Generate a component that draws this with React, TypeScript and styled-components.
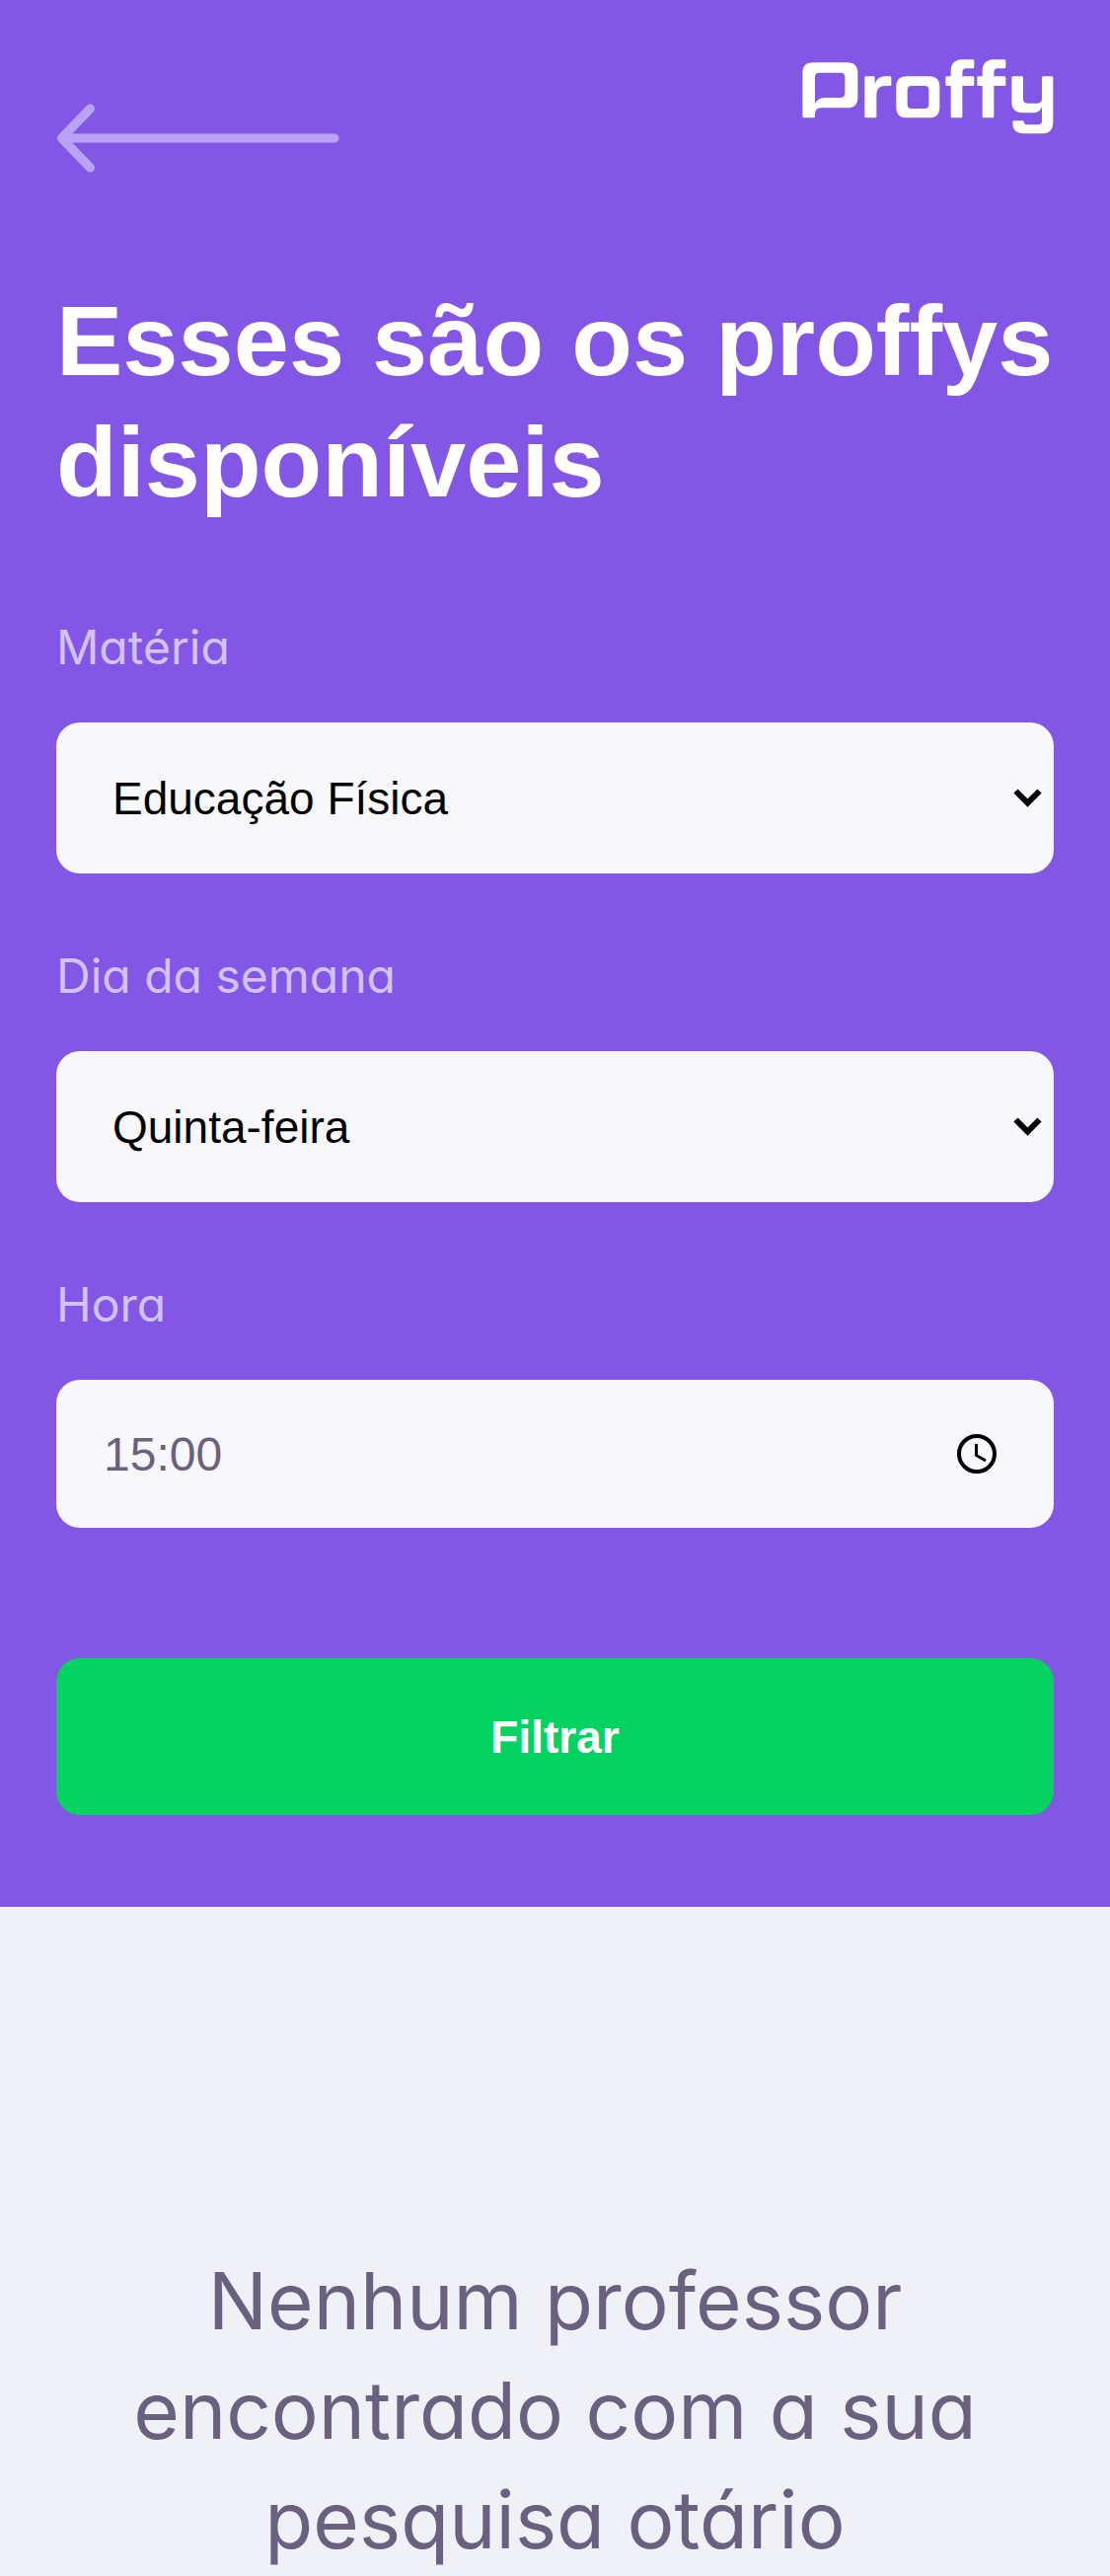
import React, { useState } from "react";
import styled, { createGlobalStyle } from "styled-components";

const GlobalStyle = createGlobalStyle`
  * {
    box-sizing: border-box;
    margin: 0;
    padding: 0;
  }

  body {
    min-height: 100vh;
    background: #f0f0f7;
    font-family: Inter, "Open Sans", sans-serif;
    font-feature-settings: "cv11" 1;
  }

  input, select, button {
    font-family: "Liberation Sans", Arial, sans-serif;
  }
`;

const Header = styled.header`
  display: flex;
  flex-direction: column;
  padding: 60px 57px 93px;
  background: #8257e5;
`;

const TopBar = styled.div`
  display: flex;
  justify-content: space-between;
  align-items: flex-start;
`;

const BackLink = styled.a`
  display: flex;
  align-items: center;
  height: 160px;
`;

const Title = styled.h1`
  margin-top: 64px;
  color: #ffffff;
  font-family: "Liberation Sans", Arial, sans-serif;
  font-size: 101px;
  font-weight: 700;
  line-height: 123px;
`;

const Form = styled.form`
  display: flex;
  flex-direction: column;
  gap: 64px;
  margin-top: 86px;
`;

const Field = styled.div`
  display: flex;
  flex-direction: column;
  gap: 36px;
`;

const Label = styled.label`
  color: #d4c2ff;
  font-size: 48px;
  line-height: 80px;
`;

const Control = styled.div`
  display: grid;
  align-items: center;

  > * {
    grid-area: 1 / 1;
  }
`;

const Select = styled.select`
  width: 100%;
  height: 153px;
  padding: 0 57px;
  border: 0;
  border-radius: 24px;
  outline: 0;
  appearance: none;
  background: #f8f8fc;
  color: #000000;
  font-size: 46px;
`;

const TimeInput = styled.input`
  width: 100%;
  height: 150px;
  padding: 0 48px;
  border: 0;
  border-radius: 24px;
  outline: 0;
  background: #f8f8fc;
  color: #6a6180;
  font-size: 48px;
`;

const ControlIcon = styled.svg<{ $inset: number }>`
  justify-self: end;
  margin-right: ${({ $inset }) => $inset}px;
  pointer-events: none;
`;

const SubmitButton = styled.button`
  height: 159px;
  margin-top: 68px;
  border: 0;
  border-radius: 24px;
  background: #04d361;
  color: #ffffff;
  font-size: 46px;
  font-weight: 700;
  cursor: pointer;
`;

const Results = styled.main`
  padding: 343px 96px 0;
`;

const EmptyMessage = styled.p`
  color: #6a6180;
  font-size: 80px;
  line-height: 111px;
  text-align: center;
`;

function BackArrow() {
  return (
    <svg width="287" height="70" viewBox="0 0 287 70" fill="none" stroke="#baa3f4" strokeWidth="9" strokeLinecap="round" strokeLinejoin="round" aria-hidden="true">
      <path d="M34.500 5L5.500 35L34.500 65M6 35H282" />
    </svg>
  );
}

function Logo() {
  return (
    <svg width="255" height="76" viewBox="98 89 765 228" fill="#ffffff" role="img" aria-label="Proffy">
      <path fillRule="evenodd" d="M99 131Q99 99 131 99H235Q267 99 267 131V205Q267 237 235 237H154Q137 237 137 256V262Q137 267 132 267H104Q99 267 99 262ZM137 143V224Q145 206 167 206H214Q228 206 228 192V143Q228 130 214 130H150Q137 130 137 143Z" />
      <path d="M288 145Q288 141 292 141H315Q319 141 319 145V163Q328 141 350 141H365Q369 141 369 145V166Q369 170 365 170H350Q324 170 324 197V263Q324 267 320 267H292Q288 267 288 263Z" />
      <path fillRule="evenodd" d="M416 141H484Q516 141 516 173V235Q516 267 484 267H416Q384 267 384 235V173Q384 141 416 141ZM430 170Q418 170 418 182V227Q418 239 430 239H471Q483 239 483 227V182Q483 170 471 170Z" />
      <path id="logo-f" d="M550 141V126Q550 90 586 90H617Q621 90 621 94V113Q621 117 617 117H597Q585 117 585 129V141H617Q621 141 621 145V166Q621 170 617 170H585V263Q585 267 581 267H554Q550 267 550 263V170H538Q534 170 534 166V145Q534 141 538 141Z" />
      <use href="#logo-f" x="96" />
      <path d="M735 145Q735 141 739 141H766Q770 141 770 145V210Q770 223 783 223H813Q827 223 827 209V145Q827 141 831 141H857Q861 141 861 145V280Q861 315 826 315H771Q738 315 738 282V280Q738 276 742 276H771Q771 288 782 288H815Q827 288 827 276V233Q820 252 801 252H768Q735 252 735 219Z" />
    </svg>
  );
}

function Chevron() {
  return (
    <ControlIcon $inset={12} width="29" height="19" viewBox="0 0 29 19" fill="none" stroke="#000000" strokeWidth="6" aria-hidden="true">
      <path d="M2.500 2.500L14.500 14.500L26.500 2.500" />
    </ControlIcon>
  );
}

function Clock() {
  return (
    <ControlIcon $inset={58} width="40" height="40" viewBox="0 0 40 40" fill="none" stroke="#000000" aria-hidden="true">
      <circle cx="20" cy="20" r="18" strokeWidth="4" />
      <path d="M19.500 10V21.500L29 27" strokeWidth="3" />
    </ControlIcon>
  );
}

const subjects = ["Artes", "Biologia", "Ciências", "Educação Física", "Física", "Geografia", "História", "Matemática", "Português", "Química"];
const weekDays = ["Domingo", "Segunda-feira", "Terça-feira", "Quarta-feira", "Quinta-feira", "Sexta-feira", "Sábado"];

interface SelectFieldProps {
  id: string;
  label: string;
  options: string[];
  value: string;
  onChange: (value: string) => void;
}

function SelectField({ id, label, options, value, onChange }: SelectFieldProps) {
  return (
    <Field>
      <Label htmlFor={id}>{label}</Label>
      <Control>
        <Select id={id} value={value} onChange={(e) => onChange(e.target.value)}>
          {options.map((option) => (
            <option key={option} value={option}>
              {option}
            </option>
          ))}
        </Select>
        <Chevron />
      </Control>
    </Field>
  );
}

export default function App() {
  const [subject, setSubject] = useState("Educação Física");
  const [weekDay, setWeekDay] = useState("Quinta-feira");
  const [time, setTime] = useState("15:00");

  return (
    <>
      <GlobalStyle />
      <Header>
        <TopBar>
          <BackLink href="#" aria-label="Voltar">
            <BackArrow />
          </BackLink>
          <Logo />
        </TopBar>
        <Title>Esses são os proffys disponíveis</Title>
        <Form onSubmit={(e) => e.preventDefault()}>
          <SelectField id="subject" label="Matéria" options={subjects} value={subject} onChange={setSubject} />
          <SelectField id="week_day" label="Dia da semana" options={weekDays} value={weekDay} onChange={setWeekDay} />
          <Field>
            <Label htmlFor="time">Hora</Label>
            <Control>
              <TimeInput id="time" type="text" inputMode="numeric" value={time} onChange={(e) => setTime(e.target.value)} />
              <Clock />
            </Control>
          </Field>
          <SubmitButton type="submit">Filtrar</SubmitButton>
        </Form>
      </Header>
      <Results>
        <EmptyMessage>Nenhum professor encontrado com a sua pesquisa otário</EmptyMessage>
      </Results>
    </>
  );
}
